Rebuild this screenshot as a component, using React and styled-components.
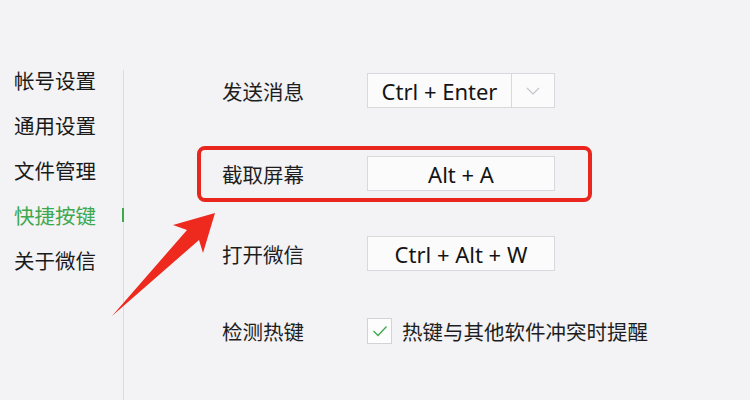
import React from 'react';
import styled, { createGlobalStyle } from 'styled-components';

const GlobalStyle = createGlobalStyle`
  html, body {
    margin: 0;
    padding: 0;
    background: #f3f2f5;
  }
  body {
    font-family: "Noto Sans", "Noto Sans CJK SC", sans-serif;
    color: #1e1e1e;
  }
`;

const Page = styled.div`
  position: relative;
  width: 750px;
  height: 400px;
  overflow: hidden;
  display: flex;
  background: #f3f2f5;
`;

const Sidebar = styled.nav`
  width: 123px;
  padding-top: 58px;
  display: flex;
  flex-direction: column;
`;

const NavItem = styled.div`
  position: relative;
  height: 45px;
  line-height: 45px;
  padding-left: 14px;
  font-family: "Noto Sans CJK SC", sans-serif;
  font-size: 20.5px;
  color: ${p => (p.$active ? '#3ea84e' : '#1a1a1a')};

  &::after {
    content: '';
    display: ${p => (p.$active ? 'block' : 'none')};
    position: absolute;
    right: -1px;
    top: 15px;
    width: 2px;
    height: 14px;
    background: #3ea84e;
  }
`;

const Divider = styled.div`
  width: 1px;
  margin-top: 70px;
  background: #dcdbe0;
`;

const Main = styled.main`
  flex: 1;
  padding: 73px 0 0 98px;
  display: flex;
  flex-direction: column;
`;

const Row = styled.div`
  position: relative;
  display: flex;
  align-items: center;
  width: max-content;
  height: 35px;
  margin-top: ${p => p.$space || 0}px;

  &::before {
    content: '';
    display: ${p => (p.$marked ? 'block' : 'none')};
    position: absolute;
    left: -25px;
    right: -37px;
    top: -10px;
    bottom: -11px;
    border: 4px solid #e8261d;
    border-radius: 8px;
  }
`;

const Label = styled.div`
  width: 145px;
  font-family: "Noto Sans CJK SC", sans-serif;
  font-size: 20.5px;
  color: #1e1e1e;
`;

const KeyBox = styled.div`
  display: flex;
  width: 188px;
  height: 35px;
  box-sizing: border-box;
  border: 1px solid #d9d8dc;
  background: #fbfbfc;
`;

const KeyText = styled.div`
  flex: 1;
  display: flex;
  align-items: center;
  justify-content: center;
  font-size: 22px;
  color: #141414;
`;

const DropButton = styled.div`
  width: 42px;
  display: flex;
  align-items: center;
  justify-content: center;
  border-left: 1px solid #d9d8dc;
`;

const Check = styled.div`
  width: 25px;
  height: 26px;
  box-sizing: border-box;
  border: 1px solid #d3d2d6;
  background: #fdfdfd;
  display: flex;
  align-items: center;
  justify-content: center;
  margin-right: 10px;
`;

const CheckText = styled.span`
  font-family: "Noto Sans CJK SC", sans-serif;
  font-size: 20.5px;
  color: #1e1e1e;
`;

const ArrowLayer = styled.svg`
  position: absolute;
  left: 0;
  top: 0;
  pointer-events: none;
`;

const Shortcut = ({ label, keys, dropdown, marked, space }) => (
  <Row $marked={marked} $space={space}>
    <Label>{label}</Label>
    <KeyBox>
      <KeyText>{keys}</KeyText>
      {dropdown && (
        <DropButton>
          <svg width="14" height="8" viewBox="0 0 14 8">
            <path d="M1 1 L7 7 L13 1" fill="none" stroke="#c4c3c8" strokeWidth="1.2" />
          </svg>
        </DropButton>
      )}
    </KeyBox>
  </Row>
);

const navItems = ['帐号设置', '通用设置', '文件管理', '快捷按键', '关于微信'];

export default function App() {
  return (
    <Page>
      <GlobalStyle />
      <Sidebar>
        {navItems.map(item => (
          <NavItem key={item} $active={item === '快捷按键'}>{item}</NavItem>
        ))}
      </Sidebar>
      <Divider />
      <Main>
        <Shortcut label="发送消息" keys="Ctrl + Enter" dropdown />
        <Shortcut label="截取屏幕" keys="Alt + A" marked space={48} />
        <Shortcut label="打开微信" keys="Ctrl + Alt + W" space={45} />
        <Row $space={42}>
          <Label>检测热键</Label>
          <Check>
            <svg width="16" height="12" viewBox="0 0 16 12">
              <path d="M1.5 6 L6 10.5 L14.5 1.5" fill="none" stroke="#3ea84e" strokeWidth="1.3" />
            </svg>
          </Check>
          <CheckText>热键与其他软件冲突时提醒</CheckText>
        </Row>
      </Main>
      <ArrowLayer width="750" height="400" viewBox="0 0 750 400">
        <polygon
          points="112,316 187,230 173,225 215,213 203,253 199,240"
          fill="#ee2a1e"
        />
      </ArrowLayer>
    </Page>
  );
}
